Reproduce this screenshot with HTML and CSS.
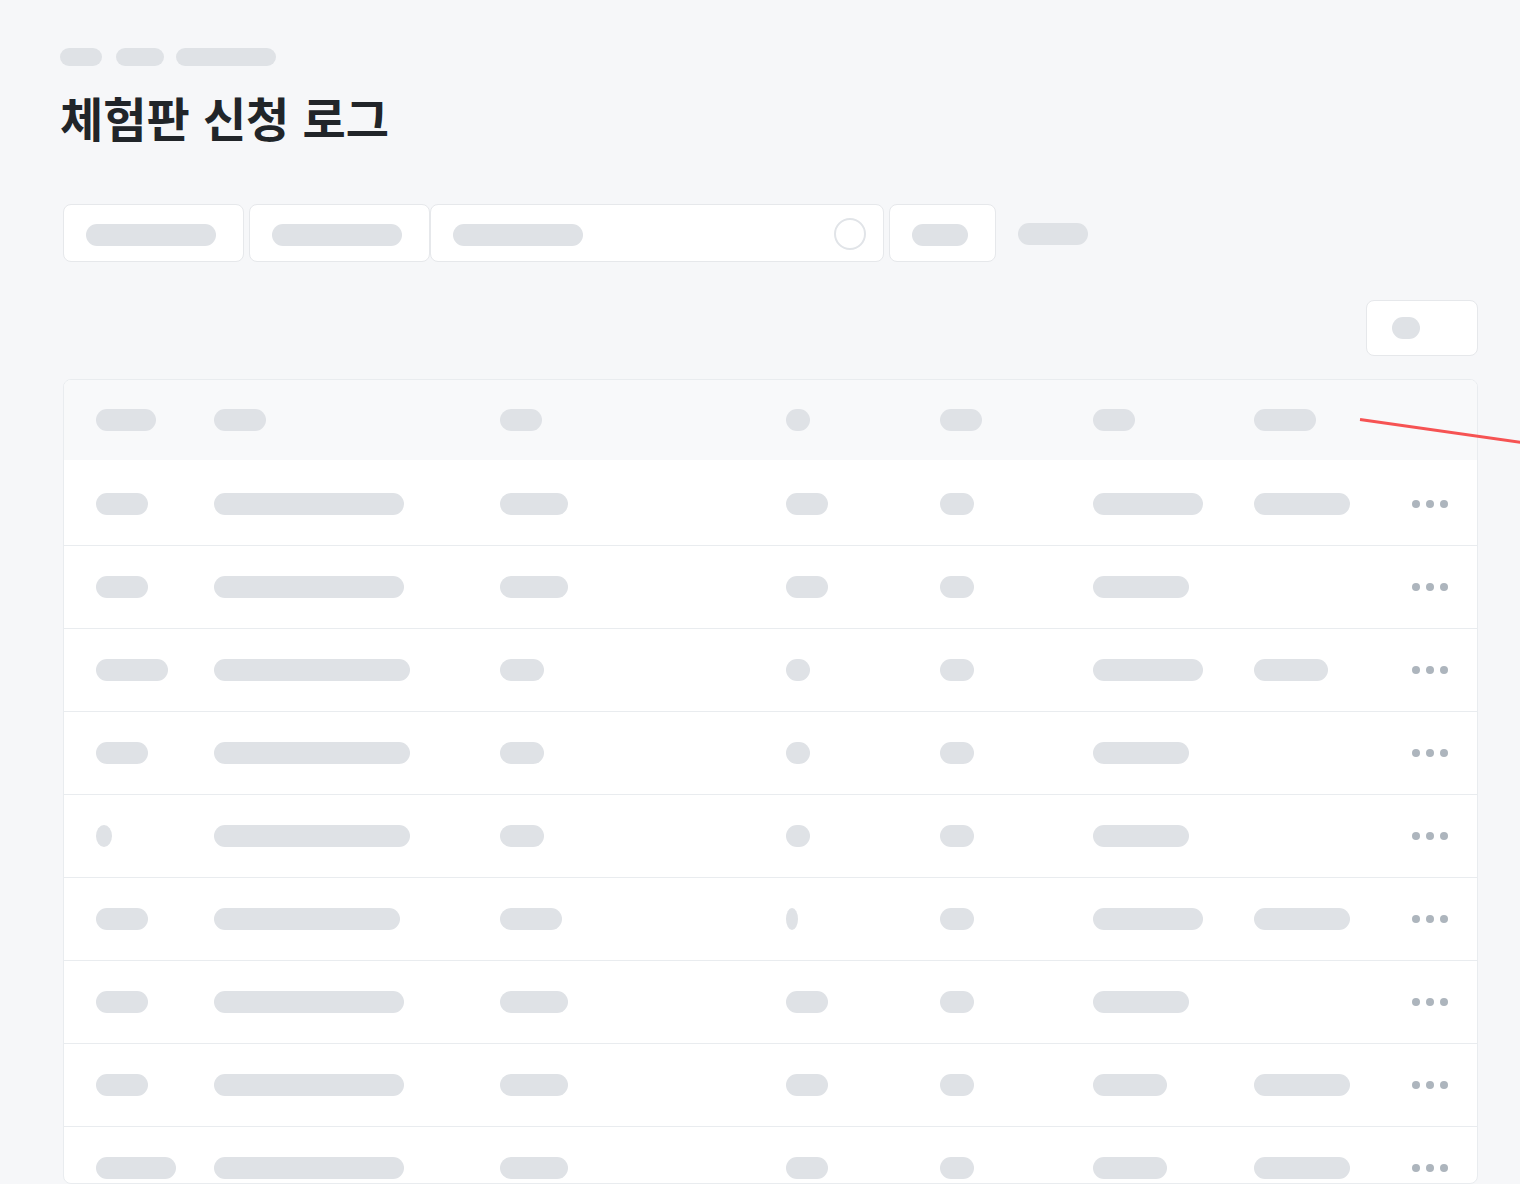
FILE: index.html
```html
<!DOCTYPE html>
<html lang="ko">
<head>
<meta charset="utf-8">
<title>체험판 신청 로그</title>
<link rel="stylesheet" href="styles.css">
</head>
<body>
<div class="page">
  <div class="crumbs">
    <span class="sk" style="width:42px"></span>
    <span class="sk crumb-2" style="width:48px"></span>
    <span class="sk" style="width:100px"></span>
  </div>
  <h1 class="title">체험판 신청 로그</h1>

  <div class="filters">
    <div class="field f1"><span class="sk" style="width:130px"></span></div>
    <div class="field f2"><span class="sk" style="width:130px"></span></div>
    <div class="field f3"><span class="sk" style="width:130px"></span><span class="ring"></span></div>
    <div class="field f4"><span class="sk" style="width:56px"></span></div>
    <span class="sk link" style="width:70px"></span>
  </div>

  <div class="toolbar">
    <div class="btn"><span class="sk" style="width:28px"></span></div>
  </div>

  <div class="table">
    <div class="row head">
      <div><span class="sk" style="width:60px"></span></div>
      <div><span class="sk" style="width:52px"></span></div>
      <div><span class="sk" style="width:42px"></span></div>
      <div><span class="sk" style="width:24px"></span></div>
      <div><span class="sk" style="width:42px"></span></div>
      <div><span class="sk" style="width:42px"></span></div>
      <div><span class="sk" style="width:62px"></span></div>
      <div></div>
    </div>

    <div class="row body first">
      <div><span class="sk" style="width:52px"></span></div>
      <div><span class="sk" style="width:190px"></span></div>
      <div><span class="sk" style="width:68px"></span></div>
      <div><span class="sk" style="width:42px"></span></div>
      <div><span class="sk" style="width:34px"></span></div>
      <div><span class="sk" style="width:110px"></span></div>
      <div><span class="sk" style="width:96px"></span></div>
      <div class="dots"><i></i><i></i><i></i></div>
    </div>

    <div class="row body">
      <div><span class="sk" style="width:52px"></span></div>
      <div><span class="sk" style="width:190px"></span></div>
      <div><span class="sk" style="width:68px"></span></div>
      <div><span class="sk" style="width:42px"></span></div>
      <div><span class="sk" style="width:34px"></span></div>
      <div><span class="sk" style="width:96px"></span></div>
      <div></div>
      <div class="dots"><i></i><i></i><i></i></div>
    </div>

    <div class="row body">
      <div><span class="sk" style="width:72px"></span></div>
      <div><span class="sk" style="width:196px"></span></div>
      <div><span class="sk" style="width:44px"></span></div>
      <div><span class="sk" style="width:24px"></span></div>
      <div><span class="sk" style="width:34px"></span></div>
      <div><span class="sk" style="width:110px"></span></div>
      <div><span class="sk" style="width:74px"></span></div>
      <div class="dots"><i></i><i></i><i></i></div>
    </div>

    <div class="row body">
      <div><span class="sk" style="width:52px"></span></div>
      <div><span class="sk" style="width:196px"></span></div>
      <div><span class="sk" style="width:44px"></span></div>
      <div><span class="sk" style="width:24px"></span></div>
      <div><span class="sk" style="width:34px"></span></div>
      <div><span class="sk" style="width:96px"></span></div>
      <div></div>
      <div class="dots"><i></i><i></i><i></i></div>
    </div>

    <div class="row body">
      <div><span class="sk oval" style="width:16px"></span></div>
      <div><span class="sk" style="width:196px"></span></div>
      <div><span class="sk" style="width:44px"></span></div>
      <div><span class="sk" style="width:24px"></span></div>
      <div><span class="sk" style="width:34px"></span></div>
      <div><span class="sk" style="width:96px"></span></div>
      <div></div>
      <div class="dots"><i></i><i></i><i></i></div>
    </div>

    <div class="row body">
      <div><span class="sk" style="width:52px"></span></div>
      <div><span class="sk" style="width:186px"></span></div>
      <div><span class="sk" style="width:62px"></span></div>
      <div><span class="sk oval" style="width:12px"></span></div>
      <div><span class="sk" style="width:34px"></span></div>
      <div><span class="sk" style="width:110px"></span></div>
      <div><span class="sk" style="width:96px"></span></div>
      <div class="dots"><i></i><i></i><i></i></div>
    </div>

    <div class="row body">
      <div><span class="sk" style="width:52px"></span></div>
      <div><span class="sk" style="width:190px"></span></div>
      <div><span class="sk" style="width:68px"></span></div>
      <div><span class="sk" style="width:42px"></span></div>
      <div><span class="sk" style="width:34px"></span></div>
      <div><span class="sk" style="width:96px"></span></div>
      <div></div>
      <div class="dots"><i></i><i></i><i></i></div>
    </div>

    <div class="row body">
      <div><span class="sk" style="width:52px"></span></div>
      <div><span class="sk" style="width:190px"></span></div>
      <div><span class="sk" style="width:68px"></span></div>
      <div><span class="sk" style="width:42px"></span></div>
      <div><span class="sk" style="width:34px"></span></div>
      <div><span class="sk" style="width:74px"></span></div>
      <div><span class="sk" style="width:96px"></span></div>
      <div class="dots"><i></i><i></i><i></i></div>
    </div>

    <div class="row body">
      <div><span class="sk" style="width:80px"></span></div>
      <div><span class="sk" style="width:190px"></span></div>
      <div><span class="sk" style="width:68px"></span></div>
      <div><span class="sk" style="width:42px"></span></div>
      <div><span class="sk" style="width:34px"></span></div>
      <div><span class="sk" style="width:74px"></span></div>
      <div><span class="sk" style="width:96px"></span></div>
      <div class="dots"><i></i><i></i><i></i></div>
    </div>
  </div>
</div>

<svg class="annot" width="1520" height="1184" viewBox="0 0 1520 1184" aria-hidden="true">
  <line x1="1360" y1="419.5" x2="1522" y2="442.5" stroke="#f65353" stroke-width="3" stroke-linecap="butt"/>
</svg>
</body>
</html>
```

FILE: styles.css
```css
html, body {
  margin: 0;
  padding: 0;
}

body {
  position: relative;
  background: #f6f7f9;
  font-family: "Noto Sans CJK KR", "Noto Sans", sans-serif;
  color: #212529;
  width: 1520px;
  height: 1184px;
  overflow: hidden;
}

.page {
  box-sizing: border-box;
  height: 1184px;
  padding: 48px 42px 0 60px;
}

.sk {
  display: block;
  flex: none;
  height: 22px;
  border-radius: 999px;
  background: #dfe2e6;
}
.sk.oval {
  border-radius: 50%;
}

/* breadcrumb */
.crumbs {
  display: flex;
  gap: 12px;
}
.crumbs .sk {
  height: 18px;
}
.crumbs .crumb-2 {
  margin-left: 2px;
}

/* title */
.title {
  margin: 25px 0 0;
  font-size: 47px;
  line-height: 52px;
  font-weight: 700;
  color: #212529;
  letter-spacing: 0;
}

/* filters */
.filters {
  display: flex;
  align-items: center;
  margin: 61px 0 0 3px;
}

.field {
  box-sizing: border-box;
  height: 58px;
  display: flex;
  align-items: center;
  padding-left: 22px;
  background: #fff;
  border: 1px solid #e6e8eb;
  border-radius: 8px;
}
.field .sk {
  margin-top: 4px;
}
.f1 { width: 181px; }
.f2 { width: 181px; margin-left: 5px; }
.f3 {
  width: 454px;
  justify-content: space-between;
  padding-right: 17px;
}
.f4 { width: 107px; margin-left: 5px; }
.filters .link {
  margin-left: 22px;
  margin-top: 2px;
}

.ring {
  box-sizing: border-box;
  width: 32px;
  height: 32px;
  border-radius: 50%;
  border: 2px solid #e1e4e8;
  margin-top: 2px;
}

/* toolbar */
.toolbar {
  display: flex;
  justify-content: flex-end;
  margin-top: 38px;
}
.btn {
  box-sizing: border-box;
  width: 112px;
  height: 56px;
  display: flex;
  align-items: center;
  padding-left: 25px;
  background: #fff;
  border: 1px solid #e6e8eb;
  border-radius: 8px;
}

/* table */
.table {
  box-sizing: border-box;
  margin: 23px 0 0 3px;
  height: 805px;
  background: #fff;
  border: 1px solid #e9ecef;
  border-radius: 8px;
  overflow: hidden;
}

.row {
  box-sizing: border-box;
  display: grid;
  grid-template-columns: 118px 286px 286px 154px 153px 161px 158px 36px;
  align-items: center;
  padding-left: 32px;
}

.row > div {
  display: flex;
  align-items: center;
}

.head {
  height: 80px;
  background: #f8f9fa;
}

.body {
  height: 83px;
  border-bottom: 1px solid #e9ecef;
  padding-top: 30px;
  padding-bottom: 30px;
  align-items: start;
}
.body.first {
  height: 86px;
  padding-top: 33px;
}

.dots {
  gap: 6px;
  height: 22px;
}
.dots i {
  display: block;
  width: 8px;
  height: 8px;
  border-radius: 50%;
  background: #adb5bd;
}

/* annotation stroke drawn over the page */
.annot {
  position: absolute;
  left: 0;
  top: 0;
  pointer-events: none;
}
```
